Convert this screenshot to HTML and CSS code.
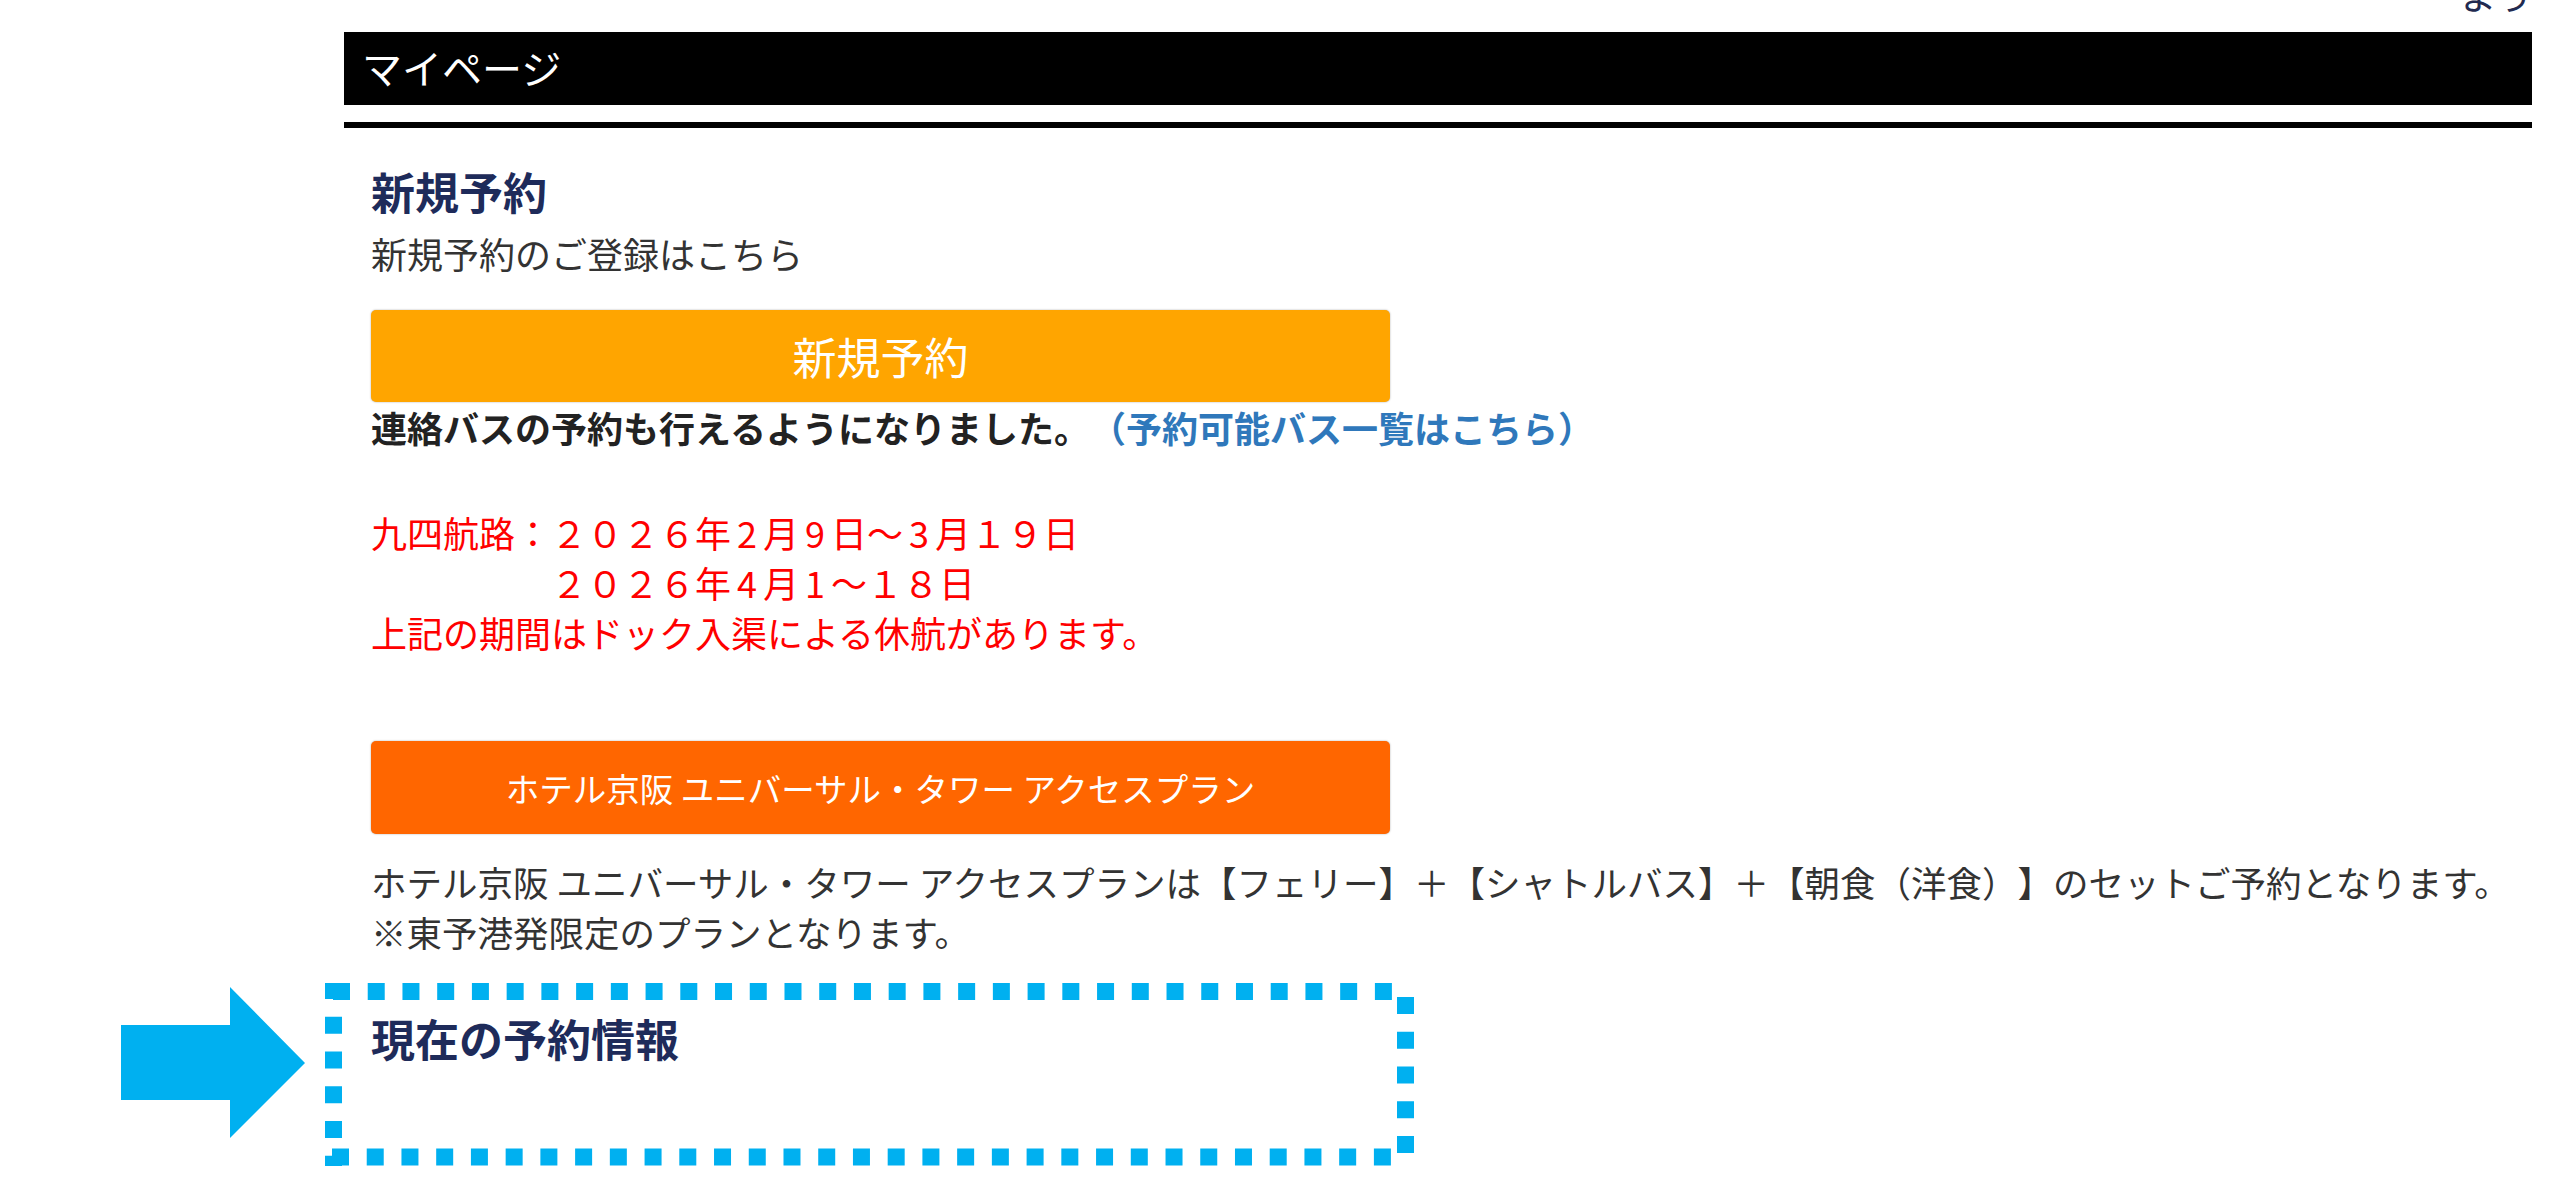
FILE: index.html
```html
<!DOCTYPE html>
<html lang="ja">
<head>
<meta charset="utf-8">
<title>マイページ</title>
<link rel="stylesheet" href="styles.css">
</head>
<body>
<div class="page">
  <div class="topline"><span class="welcome">よう</span></div>
  <div class="titlebar">マイページ</div>
  <div class="rule"></div>

  <div class="content">
    <h2 class="heading">新規予約</h2>
    <p class="text">新規予約のご登録はこちら</p>
    <a class="btn btn-new">新規予約</a>
    <p class="text notice"><b>連絡バスの予約も行えるようになりました。</b><a class="link">（予約可能バス一覧はこちら）</a></p>

    <p class="text alert">九四航路：２０２６年<span class="hw">2</span>月<span class="hw">9</span>日～<span class="hw">3</span>月１９日<br>　　　　　２０２６年<span class="hw">4</span>月<span class="hw">1</span>～１８日<br>上記の期間はドック入渠による休航があります。</p>

    <a class="btn btn-plan">ホテル京阪 ユニバーサル・タワー アクセスプラン</a>
    <p class="text desc">ホテル京阪 ユニバーサル・タワー アクセスプランは【フェリー】＋【シャトルバス】＋【朝食（洋食）】のセットご予約となります。<br>※東予港発限定のプランとなります。</p>

    <section class="current">
      <h2 class="heading">現在の予約情報</h2>
      <svg class="frame" width="1089" height="183" viewBox="0 0 1089 183">
        <g stroke="#00b0f0" stroke-width="17" fill="none" stroke-dasharray="17 17.73">
          <line x1="8" y1="8.5" x2="1068" y2="8.5"/>
          <line x1="8.5" y1="-1" x2="8.5" y2="183"/>
          <line x1="7" y1="174" x2="1067" y2="174"/>
          <line x1="1080.5" y1="14" x2="1080.5" y2="171"/>
        </g>
      </svg>
      <svg class="arrow" width="185" height="152" viewBox="0 0 185 152">
        <polygon points="0,38 109,38 109,0 184,76 109,151 109,113 0,113" fill="#00b0f0"/>
      </svg>
    </section>
  </div>
</div>
</body>
</html>
```

FILE: styles.css
```css
html, body {
  margin: 0;
  padding: 0;
  background: #ffffff;
}

body {
  font-family: "Noto Sans CJK JP", "Noto Sans", sans-serif;
  color: #333333;
  text-spacing-trim: space-all;
}

.page {
  margin-left: 344px;
  width: 2188px;
}

.topline {
  height: 32px;
  overflow: hidden;
  text-align: right;
}

.welcome {
  display: block;
  margin-top: -30px;
  font-size: 35.5px;
  line-height: 50px;
  color: #222a50;
}

.titlebar {
  height: 73px;
  background: #000000;
  color: #ffffff;
  font-size: 40px;
  line-height: 70px;
  padding-left: 18px;
  box-sizing: border-box;
}

.rule {
  margin-top: 17px;
  height: 6px;
  background: #000000;
}

.content {
  padding-left: 27px;
  display: flex;
  flex-direction: column;
  align-items: flex-start;
}

.heading {
  margin: 33px 0 0 0;
  font-size: 44px;
  line-height: 60px;
  font-weight: 700;
  color: #1e2b5a;
}

.text {
  margin: 7px 0 0 0;
  font-size: 36px;
  line-height: 50px;
  white-space: nowrap;
}

.btn {
  display: flex;
  align-items: center;
  justify-content: center;
  width: 1019px;
  border-radius: 5px;
  color: #ffffff;
  box-shadow: 0 0 2px rgba(0, 0, 0, 0.35);
  text-decoration: none;
}

.btn-new {
  margin-top: 32px;
  height: 92px;
  background: #ffa500;
  font-size: 44px;
}

.notice {
  margin-top: 0;
  color: #222222;
}

.notice b {
  font-weight: 700;
}

.link {
  color: #2f78bb;
  font-weight: 700;
}

.alert {
  margin-top: 55px;
  color: #ff0000;
}

.hw {
  display: inline-block;
  width: 32px;
  text-align: center;
}

.btn-plan {
  margin-top: 84px;
  height: 93px;
  background: #ff6600;
  font-size: 33.5px;
}

.desc {
  margin-top: 23px;
  font-size: 35.5px;
}

.current {
  position: relative;
  margin-top: 26px;
  height: 183px;
  padding-top: 25px;
  box-sizing: border-box;
  width: 1043px;
}

.current .heading {
  margin: 0;
}

.frame {
  position: absolute;
  left: -46px;
  top: 0;
}

.arrow {
  position: absolute;
  left: -250px;
  top: 4px;
}
```
